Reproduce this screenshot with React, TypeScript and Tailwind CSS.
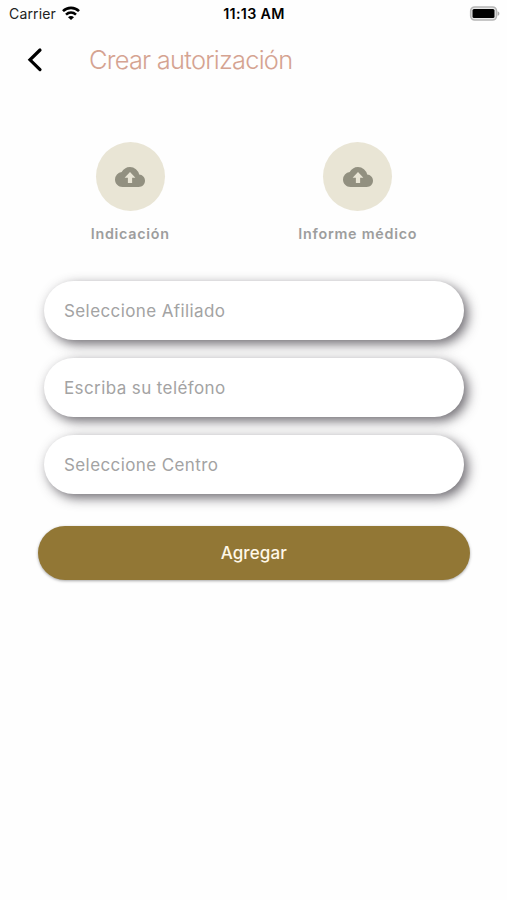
import React from "react";

function StatusBar() {
  return (
    <header className="grid h-7 grid-cols-3 items-center pl-[9px] pr-[7px] text-[14px] leading-7 text-black">
      <div className="flex items-center gap-[6px]">
        <span className="tracking-[0.15px] text-[#222]">Carrier</span>
        <svg width="18" height="14" viewBox="0 0 18 14" fill="none" stroke="#000" strokeWidth="2.6" className="-mt-[2px]">
          <path d="M1 5.1C5.4.8 12.6.8 17 5.1" />
          <path d="M4 8.6c2.9-2.6 7.1-2.6 10 0" />
          <path d="M9 13.9 6 11.2c1.8-1.5 4.2-1.5 6 0Z" fill="#000" stroke="none" />
        </svg>
      </div>
      <span className="-ml-px whitespace-nowrap text-center text-[14.3px] font-semibold tracking-[0.32px]">11:13 AM</span>
      <svg width="31" height="15" viewBox="0 0 31 15" className="-mt-[2px] justify-self-end">
        <rect x="1.7" y="1" width="25.8" height="13" rx="4" fill="#e8e8e8" stroke="#b5b5b5" strokeWidth="1.6" />
        <rect x="3.5" y="3" width="22" height="9" rx="1.5" fill="#000" />
        <path d="M28.6 5.2c2.4.8 2.4 3.8 0 4.6Z" fill="#aaa" />
      </svg>
    </header>
  );
}

function CloudUpload() {
  return (
    <svg width="30" height="30" viewBox="0 0 24 24" fill="#929080">
      <path
        fillRule="evenodd"
        d="M19.35 10.04A7.49 7.49 0 0 0 12 4C9.11 4 6.6 5.64 5.35 8.04A5.994 5.994 0 0 0 0 14c0 3.31 2.69 6 6 6h13c2.76 0 5-2.24 5-5 0-2.64-2.05-4.78-4.65-4.96ZM12 8l4.3 4.6h-2.6v4.2h-3.4v-4.2H7.7Z"
      />
    </svg>
  );
}

function Upload({ label }: { label: string }) {
  return (
    <button className="flex flex-col items-center">
      <span className="flex size-[69px] items-center justify-center rounded-full bg-[#e9e5d5]">
        <CloudUpload />
      </span>
      <span className="mt-[11px] text-[14.3px] font-semibold leading-6 tracking-[0.75px] text-[#9d9d9d]">{label}</span>
    </button>
  );
}

function Field({ label }: { label: string }) {
  return (
    <button className="h-[59px] rounded-full bg-white pl-5 pt-[3px] text-left text-[17px] tracking-[0.4px] text-[#a3a3a3] shadow-[4px_4px_12px_rgba(54,50,58,0.72)]">
      {label}
    </button>
  );
}

export default function App() {
  return (
    <div className="h-[900px] w-[507px] overflow-hidden bg-[#fefefe] font-['Inter','Liberation_Sans',sans-serif]">
      <StatusBar />
      <div className="flex h-16 items-center pl-[27px]">
        <svg width="17" height="26" viewBox="0 0 17 26" fill="none" stroke="#000" strokeWidth="3.2" strokeLinecap="round" strokeLinejoin="miter">
          <path d="M13 3 3 12.8l10 9.8" />
        </svg>
        <h1 className="ml-[45px] text-[25.4px] font-light tracking-[-0.75px] text-[#d5a391]">Crear autorización</h1>
      </div>
      <div className="ml-[16.5px] mt-[50px] grid w-[455px] grid-cols-2">
        <Upload label="Indicación" />
        <Upload label="Informe médico" />
      </div>
      <div className="ml-[44px] mt-[34.5px] flex w-[419.5px] flex-col gap-[18px]">
        <Field label="Seleccione Afiliado" />
        <Field label="Escriba su teléfono" />
        <Field label="Seleccione Centro" />
      </div>
      <button className="ml-[38px] mt-[32.5px] block h-[54px] w-[431.5px] rounded-full bg-[#927735] pt-px text-[17px] font-medium tracking-[0.1px] text-[#fff8e8] shadow-[0_1px_3px_rgba(0,0,0,0.35)]">
        Agregar
      </button>
    </div>
  );
}
